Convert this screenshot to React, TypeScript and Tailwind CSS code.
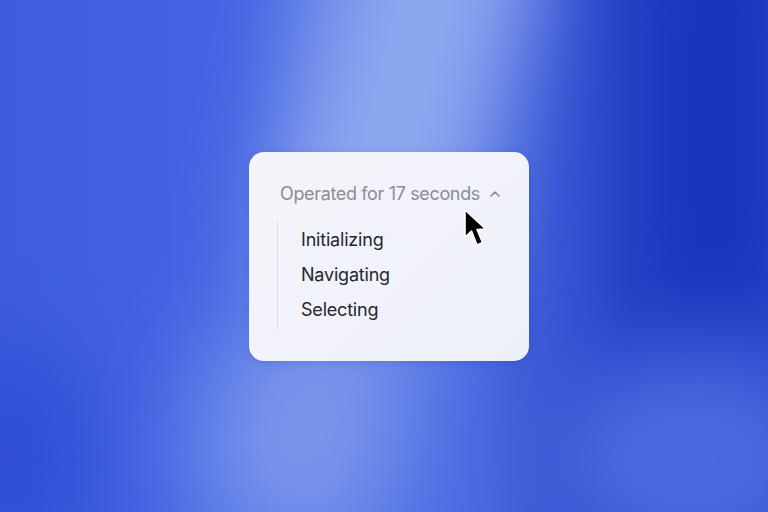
import React from "react";
import { ChevronUp } from "lucide-react";

export default function App() {
  const items = ["Initializing", "Navigating", "Selecting"];
  return (
    <div
      className="relative w-full h-[512px] overflow-hidden bg-[linear-gradient(90deg,#3d5cdf_0%,#4565e3_30%,#5876e6_42%,#4a69e1_62%,#2a44c8_82%,#2c47cb_100%)]"
      style={{ fontFamily: "Inter, 'Noto Sans', sans-serif" }}
    >
      {/* decorative light / shade blobs */}
      <div className="pointer-events-none absolute left-[310px] top-[-160px] w-[190px] h-[500px] rounded-full bg-[#8ea8ef] blur-[45px] rotate-[14deg]" />
      <div className="pointer-events-none absolute left-[200px] top-[300px] w-[200px] h-[260px] rounded-full bg-[#7e9aec] blur-[50px] rotate-[18deg] opacity-90" />
      <div className="pointer-events-none absolute left-[650px] top-[-80px] w-[130px] h-[400px] rounded-full bg-[#1832bb] blur-[40px]" />
      <div className="pointer-events-none absolute left-[-60px] top-[350px] w-[140px] h-[220px] rounded-full bg-[#2f4fd5] blur-[40px]" />
      <div className="pointer-events-none absolute left-[560px] top-[360px] w-[260px] h-[200px] rounded-full bg-[#4b6ae1] blur-[40px]" />

      <div className="relative flex h-full items-center justify-center">
        <div className="ml-[10px] w-[280px] rounded-[15px] bg-[linear-gradient(135deg,#f4f5fb_0%,#eef0f9_100%)] shadow-[0_2px_10px_rgba(20,40,140,0.18)] pt-[30px] pb-[31px]">
          <div className="flex items-center pl-[31px] h-[24px] text-[18px] leading-[24px] text-[#8b8c96] tracking-[-0.35px]">
            <span>Operated for 17 seconds</span>
            <ChevronUp size={16} strokeWidth={2.4} className="ml-[7px] text-[#8b8c96]" />
          </div>
          <div className="ml-[28px] mt-[14px] border-l-[1.5px] border-[#dcdde6] pt-[2px] pb-[3px] pl-[23px]">
            {items.map((t) => (
              <div key={t} className="h-[35px] text-[18px] leading-[35px] text-[#26272f] tracking-[-0.2px]">
                {t}
              </div>
            ))}
          </div>
        </div>
      </div>

      {/* cursor */}
      <svg
        className="absolute left-[463px] top-[208px]"
        width="28"
        height="42"
        viewBox="0 0 28 42"
      >
        <path
          d="M2 2 L2 29 L8.5 23 L14 37 L19.5 34.5 L14 21.5 L22.5 21 Z"
          fill="#000"
          stroke="#fff"
          strokeWidth="1.6"
          strokeLinejoin="round"
        />
      </svg>
    </div>
  );
}
